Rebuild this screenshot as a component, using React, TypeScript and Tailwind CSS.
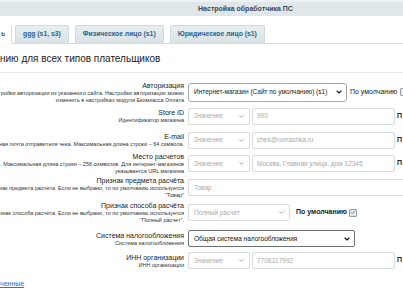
import { ChevronDown, Check } from "lucide-react";

type Row = {
  title: string;
  desc: string[];
  h: string;
  kind: "site" | "value" | "wide" | "mode" | "tax";
  value?: string;
};

const rows: Row[] = [
  {
    title: "Авторизация",
    desc: [
      "Использовать настройки авторизации из указанного сайта. Настройки авторизации можно",
      "изменить в настройках модуля Екомкасса Оплата",
    ],
    h: "h-[24px]",
    kind: "site",
  },
  { title: "Store ID", desc: ["Идентификатор магазина"], h: "h-[24px]", kind: "value", value: "990" },
  {
    title: "E-mail",
    desc: ["Электронная почта отправителя чека. Максимальная длина строки – 64 символа."],
    h: "h-[24px]",
    kind: "value",
    value: "chek@romashka.ru",
  },
  {
    title: "Место расчетов",
    desc: [
      "Адрес места расчетов. Максимальная длина строки – 256 символов. Для интернет-магазинов",
      "указывается URL магазина",
    ],
    h: "h-[23px]",
    kind: "value",
    value: "Москва, Главная улица, дом 12345",
  },
  {
    title: "Признак предмета расчёта",
    desc: ["Признак предмета расчёта. Если не выбрано, то по умолчанию используется", "\"Товар\""],
    h: "h-[25px]",
    kind: "wide",
  },
  {
    title: "Признак способа расчёта",
    desc: ["Признак способа расчёта. Если не выбрано, то по умолчанию используется", "\"Полный расчет\"."],
    h: "h-[25px]",
    kind: "mode",
  },
  { title: "Система налогообложения", desc: ["Система налогообложения"], h: "h-[27px]", kind: "tax" },
  { title: "ИНН организации", desc: ["ИНН организации"], h: "h-[17px]", kind: "value", value: "7708317992" },
];

const Muted = ({ text, w }: { text: string; w: string }) => (
  <div className={`${w} h-[17px] shrink-0 border border-[#d9dcde] rounded-[2px] bg-white flex items-center justify-between pl-[5px] pr-[4px] text-[6.5px] text-[#a7abae]`}>
    <span className="whitespace-nowrap">{text}</span>
    <ChevronDown size={7} strokeWidth={3} className="text-[#9aa0a4]" />
  </div>
);

const Field = ({ value }: { value: string }) => (
  <div className="w-[143px] h-[17px] shrink-0 border border-[#d9dcde] rounded-[2px] bg-white flex items-center pl-[4px] text-[6.5px] text-[#a7abae] whitespace-nowrap">
    {value}
  </div>
);

const Control = ({ row }: { row: Row }) => {
  if (row.kind === "site")
    return (
      <div className="flex items-center gap-[3px]">
        <div className="w-[159px] h-[19px] shrink-0 border border-[#a5a9ac] rounded-[3px] bg-white flex items-center justify-between pl-[5px] pr-[3px] text-[6.5px] text-[#222]">
          <span className="whitespace-nowrap">Интернет-магазин (Сайт по умолчанию) (s1)</span>
          <ChevronDown size={8} strokeWidth={3.5} className="text-[#222]" />
        </div>
        <span className="text-[7px] text-[#222] whitespace-nowrap">По умолчанию</span>
        <span className="w-[8px] h-[8px] shrink-0 border border-[#9da3a6] rounded-[1px] bg-[#e7eaeb]" />
      </div>
    );
  if (row.kind === "value")
    return (
      <div className="flex items-center gap-[2px]">
        <Muted text="Значение" w="w-[62px]" />
        <Field value={row.value ?? ""} />
        <span className="text-[7px] font-bold text-[#222]">П</span>
      </div>
    );
  if (row.kind === "wide") return <Muted text="Товар" w="w-[230px]" />;
  if (row.kind === "mode")
    return (
      <div className="flex items-center gap-[2px]">
        <Muted text="Полный расчет" w="w-[102px]" />
        <span className="ml-[4px] text-[7px] font-bold text-[#222] whitespace-nowrap">По умолчанию</span>
        <span className="w-[8px] h-[8px] shrink-0 border border-[#9da3a6] rounded-[1px] bg-[#e3e6e8] flex items-center justify-center">
          <Check size={7} strokeWidth={3} className="text-[#6c7478]" />
        </span>
      </div>
    );
  return (
    <div className="w-[167px] h-[17px] border border-[#6e7376] rounded-[2px] bg-white flex items-center justify-between pl-[5px] pr-[3px] text-[6.5px] text-[#111]">
      <span className="whitespace-nowrap">Общая система налогообложения</span>
      <ChevronDown size={8} strokeWidth={3.5} className="text-[#111]" />
    </div>
  );
};

export default function App() {
  return (
    <div className="w-[403px] h-[294px] overflow-hidden bg-white font-['Liberation_Sans',Arial,sans-serif] flex flex-col">
      <div className="h-[2px] bg-[#eef2f3]" />
      <div className="h-[14px] bg-[#e0e7ea] flex items-center justify-center pl-[88px] text-[7px] font-bold text-[#3c4850]">
        Настройка обработчика ПС
      </div>

      <div className="mt-[9px] h-[19px] flex items-stretch gap-[6px] border-b border-[#d5dcdf]">
        <div className="w-[12px] -mb-px mr-[-3px] bg-white border-r border-[#d5dcdf] flex items-center text-[6.8px] font-bold text-[#2d5f8f] pl-[1px]">
          ь
        </div>
        {["ggg (s1, s3)", "Физическое лицо (s1)", "Юридическое лицо (s1)"].map((t) => (
          <div
            key={t}
            className="px-[7px] bg-gradient-to-b from-[#e8eef0] to-[#d9e2e5] border border-b-0 border-[#d1dadd] rounded-t-[2px] flex items-center text-[6.8px] font-bold text-[#2d5f8f] whitespace-nowrap"
          >
            {t}
          </div>
        ))}
      </div>

      <div className="h-[29px] flex items-center pt-[1px] border-b border-[#e6e9eb] text-[10px] text-[#222] whitespace-nowrap">
        нию для всех типов плательщиков
      </div>

      <div className="mt-[7px] flex flex-col">
        {rows.map((row) => (
          <div key={row.title} className={`${row.h} flex items-center gap-[4px]`}>
            <div className="w-[184px] shrink-0 text-right text-[#222]">
              <div className="text-[7px] leading-[9px] whitespace-nowrap">{row.title}</div>
              {row.desc.map((d) => (
                <div key={d} dir="rtl" className="whitespace-nowrap text-[5.5px] leading-[7px] text-[#333]">
                  <span dir="ltr" className="inline-block">{d}</span>
                </div>
              ))}
            </div>
            <Control row={row} />
          </div>
        ))}
      </div>

      <div className="mt-[10px] text-[7px] text-[#2675d7] underline whitespace-nowrap">ченные</div>
    </div>
  );
}
